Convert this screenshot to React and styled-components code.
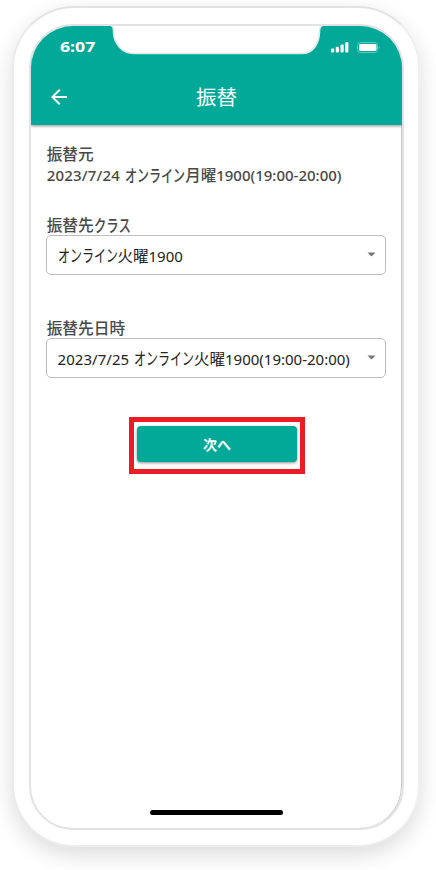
import React from "react";
import styled, { createGlobalStyle } from "styled-components";

const TEAL = "#02a999";

const Global = createGlobalStyle`
  * { box-sizing: border-box; }
  body {
    margin: 0;
    background: #fff;
    overflow: hidden;
    font-family: "Noto Sans", "Noto Sans CJK JP", sans-serif;
  }
`;

const Stage = styled.main`
  width: 436px;
  height: 870px;
  padding: 6px 0 0 12px;
  overflow: hidden;
`;

const Phone = styled.div`
  width: 408px;
  height: 841px;
  padding: 16px 14px 15px 15px;
  border: 2px solid #e4e4e4;
  border-color: #e2e2e2 #f0f0f0 #ededed #ebebeb;
  border-radius: 62px;
  background: #fff;
  box-shadow: 0 8px 22px rgba(0, 0, 0, 0.14);
`;

const Screen = styled.div`
  position: relative;
  height: 806px;
  display: flex;
  flex-direction: column;
  border: 2px solid #e2e2e2;
  border-radius: 44px;
  overflow: hidden;
  background: #fff;
  box-shadow: inset -1px 0 0 #c8c8c8;
`;

const Top = styled.header`
  flex: none;
  height: 99px;
  color: #fff;
  background: ${TEAL};
  box-shadow: 0 1px 3px rgba(0, 0, 0, 0.45);
`;

const StatusBar = styled.div`
  height: 40px;
  padding: 0 21px 0 29px;
  display: flex;
  align-items: center;
  justify-content: space-between;
`;

const Time = styled.span`
  font: 700 15px/20px "Noto Sans", sans-serif;
  transform: scaleX(1.18);
  transform-origin: left center;
`;

const StatusIcons = styled.svg`
  width: 51px;
  height: 14px;
  margin-top: 2px;
`;

const Notch = styled.svg`
  position: absolute;
  left: 75px;
  top: -2px;
  width: 222px;
  height: 34px;
`;

const TitleBar = styled.div`
  height: 59px;
  padding-top: 2px;
  display: grid;
  grid-template-columns: 56px 1fr 56px;
  align-items: center;
`;

const BackIcon = styled.svg`
  width: 24px;
  height: 24px;
  margin-left: 16px;
`;

const Title = styled.h1`
  margin: 0;
  text-align: center;
  font-size: 20.5px;
  line-height: 30px;
  font-weight: 400;
`;

const Content = styled.div`
  flex: 1;
  padding: 19px 15px 0;
  display: flex;
  flex-direction: column;
`;

const Line = styled.div`
  height: ${(p) => p.$height || 21}px;
  padding-left: 0.7px;
  line-height: 21px;
  font-size: 15px;
  font-weight: 500;
  color: #484848;
  white-space: pre;
`;

const Group = styled.section`
  margin-bottom: ${(p) => p.$gap}px;
`;

const Segment = styled.span`
  display: inline-block;
  vertical-align: top;
  width: ${(p) => p.$width}px;
  font-size: ${(p) => p.$size || 15}px;
  letter-spacing: ${(p) => p.$spacing || 0}px;
`;

const Condensed = styled.span`
  display: inline-block;
  vertical-align: top;
  transform: scaleX(${(p) => p.$scale});
  transform-origin: left center;
`;

const SelectBox = styled.div`
  width: 340px;
  height: 40px;
  padding: 1px 9px 0 10.5px;
  display: flex;
  align-items: center;
  justify-content: space-between;
  border: 1px solid #bdbdbd;
  border-radius: 5px;
  color: #222;
  font-size: 15px;
  font-weight: 400;
  line-height: 24px;
  white-space: pre;
`;

const Caret = styled.svg`
  width: 9px;
  height: 5px;
  margin-bottom: 2px;
`;

const Highlight = styled.div`
  align-self: center;
  width: 176px;
  height: 57px;
  margin-left: 1px;
  padding: 4px 3px 5px;
  border: 5px solid #ec1c24;
`;

const NextButton = styled.button`
  display: block;
  width: 160px;
  height: 36px;
  margin: 0;
  padding: 0;
  border: 0;
  border-radius: 4px;
  color: #fff;
  background: ${TEAL};
  font: 700 14px/36px "Noto Sans CJK JP", sans-serif;
  box-shadow: 0 1px 3px rgba(0, 0, 0, 0.45);
`;

const HomeBar = styled.div`
  flex: none;
  align-self: center;
  width: 133px;
  height: 5px;
  margin: 0 0 13px 0;
  border-radius: 3px;
  background: #000;
`;

function Kana({ text, width }) {
  return (
    <Segment $width={width} $size={17}>
      <Condensed $scale={width / (text.length * 17)}>{text}</Condensed>
    </Segment>
  );
}

function LessonText({ date, day, spacing, dateWidth }) {
  return (
    <span>
      <Segment $width={dateWidth} $spacing={spacing}>{date}</Segment>
      <Kana text="オンライン" width={60} />
      <Segment $width={31} $size={15.5}>{day}</Segment>
      <Segment $width={126}>1900(19:00-20:00)</Segment>
    </span>
  );
}

function Select({ children }) {
  return (
    <SelectBox>
      <span>{children}</span>
      <Caret viewBox="0 0 9 5">
        <path d="M.5 .5h8L4.5 4.5z" fill="#757575" />
      </Caret>
    </SelectBox>
  );
}

export default function App() {
  return (
    <>
      <Global />
      <Stage>
        <Phone>
          <Screen>
            <Top>
              <StatusBar>
                <Time>6:07</Time>
                <StatusIcons viewBox="0 0 51 14" fill="#fff">
                  <rect x="1" y="8.5" width="3.2" height="4" rx="1" />
                  <rect x="5.8" y="6.7" width="3.2" height="5.8" rx="1" />
                  <rect x="10.5" y="4.5" width="3.2" height="8" rx="1" />
                  <rect x="15.2" y="2" width="3.2" height="10.5" rx="1" />
                  <rect x="27.5" y="2.5" width="20" height="10" rx="2.8" fill="none" stroke="#63c9bf" />
                  <rect x="29" y="4" width="17.5" height="7" rx="1.4" />
                  <path d="M48.8 5.7q1.6 1.8 0 3.6z" opacity=".6" />
                </StatusIcons>
              </StatusBar>
              <TitleBar>
                <BackIcon viewBox="0 0 24 24" fill="#fff">
                  <path d="M20 11H7.83l5.59-5.59L12 4l-8 8 8 8 1.41-1.41L7.83 13H20v-2z" />
                </BackIcon>
                <Title>振替</Title>
              </TitleBar>
            </Top>
            <Notch viewBox="0 0 222 34">
              <path
                d="M0 -3V1H3Q7.500 1 7.500 6V8C8 20 16 29.500 28 29.500H196C207 29.500 213 20 213.500 8V7Q213.500 1 219 1H222V-3Z"
                fill="#fff"
                stroke="#dcebea"
                strokeWidth="1.6"
              />
            </Notch>
            <Content>
              <Group $gap={29}>
                <Line><Segment $width={60} $size={15.7}>振替元</Segment></Line>
                <Line><LessonText date="2023/7/24" day="月曜" spacing={0.2} dateWidth={78.5} /></Line>
              </Group>
              <Group $gap={43}>
                <Line $height={20}>
                  <Segment $width={47} $size={15.7}>振替先</Segment>
                  <Kana text="クラス" width={37} />
                </Line>
                <Select>
                  <Kana text="オンライン" width={60} />
                  <Segment $width={31} $size={15.5}>火曜</Segment>
                  <span>1900</span>
                </Select>
              </Group>
              <Group $gap={39}>
                <Line $height={20}><Segment $width={90} $size={15.7}>振替先日時</Segment></Line>
                <Select><LessonText date="2023/7/25" day="火曜" spacing={0.05} dateWidth={76.5} /></Select>
              </Group>
              <Highlight>
                <NextButton>次へ</NextButton>
              </Highlight>
            </Content>
            <HomeBar />
          </Screen>
        </Phone>
      </Stage>
    </>
  );
}
